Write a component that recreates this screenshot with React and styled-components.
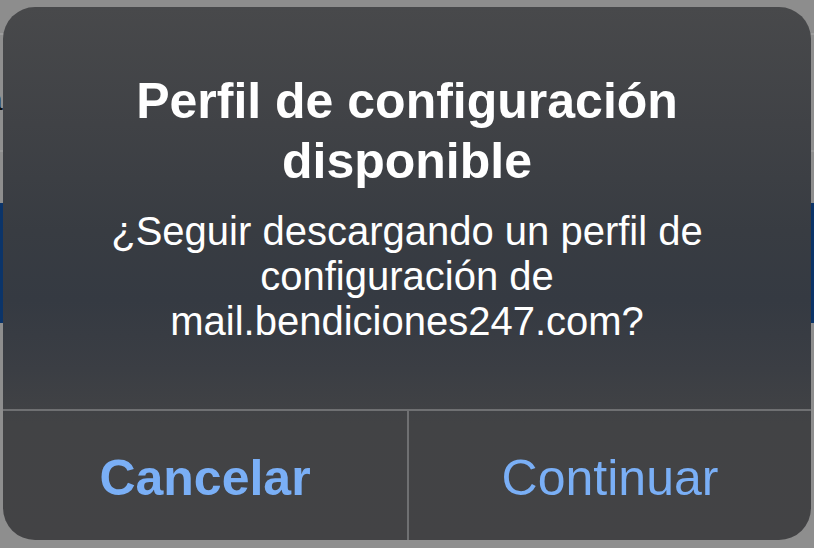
import React from 'react'
import styled, { createGlobalStyle } from 'styled-components'

const Global = createGlobalStyle`
  html, body {
    margin: 0;
    padding: 0;
    background: #8b8b8b;
  }
  body {
    font-family: "Liberation Sans", Arial, sans-serif;
    -webkit-font-smoothing: antialiased;
  }
`

const Screen = styled.div`
  position: relative;
  width: 814px;
  height: 548px;
  overflow: hidden;
  background: #8b8b8b;
`

/* dimmed page behind the alert */
const Backdrop = styled.div`
  display: flex;
  flex-direction: column;
  height: 100%;
`

const NavBar = styled.div`
  height: 33px;
  background: #8d8d8d;
  border-bottom: 2px solid #9d9d9d;
`

const PageText = styled.div`
  height: 117px;
  padding-top: 48px;
  box-sizing: border-box;
  margin-left: -14px;
  font-size: 30px;
  color: #111;
  background: #8f8f8f;
  border-bottom: 2px solid #9a9a9a;
`

const Spacer = styled.div`
  height: ${p => p.h}px;
  background: ${p => p.bg || '#8e8e8e'};
`

const Alert = styled.div`
  position: absolute;
  top: 7px;
  left: 3px;
  width: 808px;
  height: 533px;
  border-radius: 32px;
  overflow: hidden;
  display: flex;
  flex-direction: column;
  color: #fff;
  background: linear-gradient(
    180deg,
    #48494b 0%,
    #404246 22%,
    #383c42 42%,
    #353a42 55%,
    #3b3e44 68%,
    #424345 78%,
    #434345 100%
  );
`

const Body = styled.div`
  flex: 1;
  padding: 64px 40px 0;
  text-align: center;
`

const Title = styled.h1`
  margin: 0;
  font-size: 50px;
  line-height: 60px;
  font-weight: 700;
`

const Message = styled.p`
  margin: 18px 0 0;
  font-size: 40px;
  line-height: 45px;
  font-weight: 400;
`

const Actions = styled.div`
  height: 131px;
  display: grid;
  grid-template-columns: 1fr 1fr;
  border-top: 2px solid #6f7072;
  box-sizing: border-box;
`

const Action = styled.button`
  border: 0;
  background: transparent;
  padding: 4px 0 0;
  font-family: "Liberation Sans", Arial, sans-serif;
  font-size: 50px;
  font-weight: ${p => (p.bold ? 700 : 400)};
  color: #7aaff6;
  cursor: pointer;

  & + & {
    border-left: 2px solid #6f7072;
  }
`

export default function App() {
  return (
    <Screen>
      <Global />
      <Backdrop>
        <NavBar />
        <PageText>a</PageText>
        <Spacer h={51} />
        <Spacer h={120} bg="#0b3469" />
        <Spacer h={225} />
      </Backdrop>

      <Alert>
        <Body>
          <Title>Perfil de configuración disponible</Title>
          <Message>
            ¿Seguir descargando un perfil de configuración de
            mail.bendiciones247.com?
          </Message>
        </Body>
        <Actions>
          <Action bold>Cancelar</Action>
          <Action>Continuar</Action>
        </Actions>
      </Alert>
    </Screen>
  )
}
